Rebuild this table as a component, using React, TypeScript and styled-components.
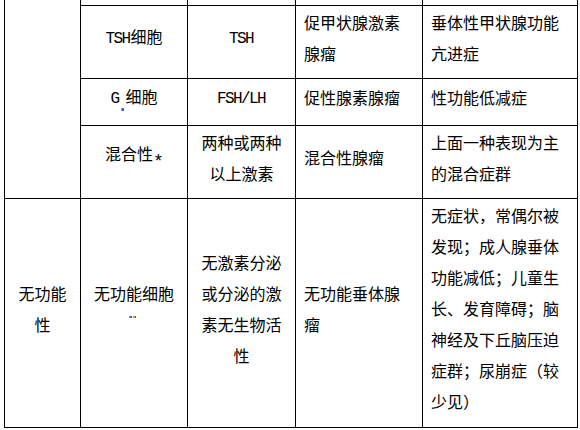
import styled, { createGlobalStyle } from 'styled-components'

const GlobalStyle = createGlobalStyle`
  html, body {
    margin: 0;
    background: #fff;
  }
  body {
    font-family: "Noto Sans CJK SC", "Noto Sans", sans-serif;
    font-size: 16px;
    color: #000;
  }
`

const Sheet = styled.div`
  width: 580px;
  height: 430px;
  overflow: hidden;
`

const Table = styled.table`
  border-collapse: collapse;
  table-layout: fixed;
  width: 574px;
  margin: -20px 0 0 4px;
`

const Row = styled.tr<{ $h: number }>`
  height: ${(p) => p.$h}px;
`

const Cell = styled.td<{ $align?: 'left' | 'center' }>`
  border: 1px solid #000;
  padding: 0 8px 9px;
  vertical-align: middle;
  text-align: ${(p) => p.$align ?? 'center'};
  line-height: 31px;
  line-break: anywhere;
  word-break: break-all;
`

const Latin = styled.span`
  font-family: "Liberation Mono", monospace;
  font-size: 16px;
  letter-spacing: -1.6px;
  margin-right: 1px;
`

const Star = styled(Latin)`
  font-size: 18px;
  vertical-align: -7px;
`

const SubMark = styled.span`
  display: inline-block;
  width: 3px;
  height: 3px;
  margin: 0 2px 0 1px;
  vertical-align: -8px;
  background: linear-gradient(90deg, #e39a4c 0 34%, #3b63d6 34% 100%);
`

const StarRow = styled.div`
  display: flex;
  justify-content: center;
  gap: 1px;
  height: 31px;
  box-sizing: border-box;
  padding: 7px 3px 0 0;
`

const StarDot = styled.span`
  width: 3px;
  height: 2px;
  background: linear-gradient(90deg, #e08a30 0 50%, #2f5fd0 50% 100%);
`

const widths = [76, 107, 108, 127, 155]

export default function App() {
  return (
    <Sheet>
      <GlobalStyle />
      <Table>
        <colgroup>
          {widths.map((w, i) => (
            <col key={i} style={{ width: w }} />
          ))}
        </colgroup>
        <tbody>
          <Row $h={25}>
            <Cell rowSpan={4} />
            <Cell />
            <Cell />
            <Cell $align="left" />
            <Cell $align="left" />
          </Row>
          <Row $h={73}>
            <Cell>
              <Latin>TSH</Latin>细胞
            </Cell>
            <Cell>
              <Latin>TSH</Latin>
            </Cell>
            <Cell $align="left">促甲状腺激素腺瘤</Cell>
            <Cell $align="left">垂体性甲状腺功能亢进症</Cell>
          </Row>
          <Row $h={47}>
            <Cell>
              <Latin>G</Latin>
              <SubMark />
              细胞
            </Cell>
            <Cell>
              <Latin>FSH/LH</Latin>
            </Cell>
            <Cell $align="left">促性腺素腺瘤</Cell>
            <Cell $align="left">性功能低减症</Cell>
          </Row>
          <Row $h={73}>
            <Cell>
              混合性<Star>*</Star>
            </Cell>
            <Cell>两种或两种以上激素</Cell>
            <Cell $align="left">混合性腺瘤</Cell>
            <Cell $align="left">上面一种表现为主的混合症群</Cell>
          </Row>
          <Row $h={229}>
            <Cell>无功能性</Cell>
            <Cell>
              <div>无功能细胞</div>
              <StarRow>
                <StarDot />
                <StarDot />
              </StarRow>
            </Cell>
            <Cell>无激素分泌或分泌的激素无生物活性</Cell>
            <Cell $align="left">无功能垂体腺瘤</Cell>
            <Cell $align="left">
              无症状，常偶尔被发现；成人腺垂体功能减低；儿童生长、发育障碍；脑神经及下丘脑压迫症群；尿崩症（较少见）
            </Cell>
          </Row>
        </tbody>
      </Table>
    </Sheet>
  )
}
